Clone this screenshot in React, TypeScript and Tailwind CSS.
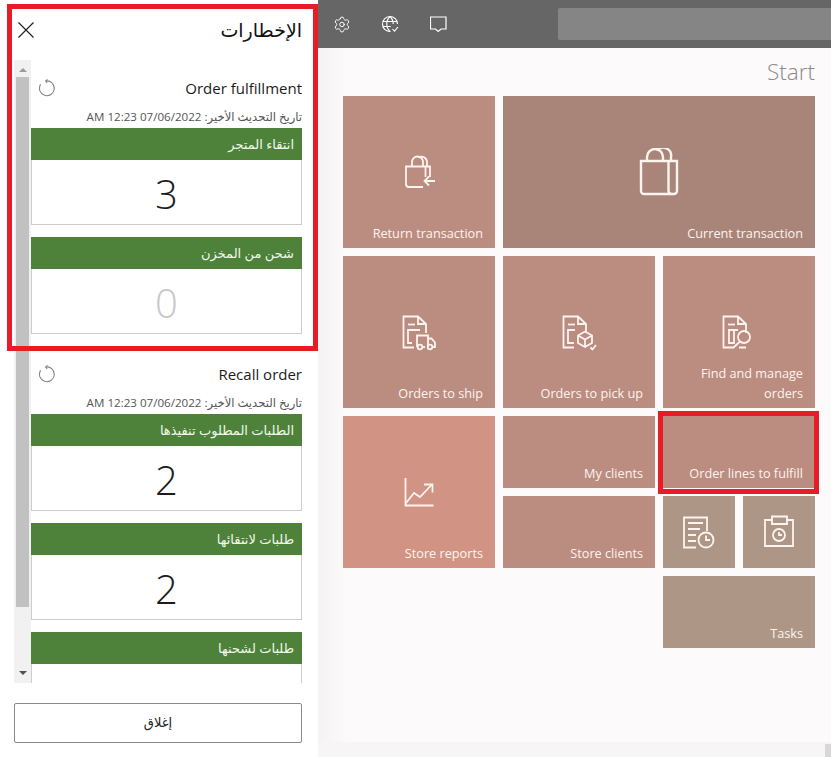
import React from "react";
import { Settings } from "lucide-react";

const font = "font-['Open_Sans','DejaVu_Sans',sans-serif]";

function DocBase() {
  return (
    <>
      <path d="M15 35.5H4.5V4.5H19L27 12V21" />
      <path d="M19 4.5V12H27" />
      <path d="M9 12.5H16" />
    </>
  );
}

function IconFrame({ children, size = 40 }: { children: React.ReactNode; size?: number }) {
  return (
    <svg width={size} height={size} viewBox="0 0 40 40" fill="none" stroke="currentColor" strokeWidth="1.8">
      {children}
    </svg>
  );
}

const ReturnIcon = () => (
  <IconFrame>
    <path d="M24 35H10a3 3 0 0 1-3-3V14.5H31V25" />
    <path d="M26.5 14.5V25" />
    <path d="M13 14.5V10a5.5 5.5 0 0 1 11 0v4.5" />
    <path d="M19.5 5.5a5.5 5.5 0 0 1 8.5 4.5v4.5" />
    <path d="M36 29H25.5M30 24.5L25.5 29L30 33.5" />
  </IconFrame>
);

const CurrentIcon = () => (
  <svg width="40" height="48" viewBox="0 0 40 48" fill="none" stroke="currentColor" strokeWidth="2.4">
    <path d="M2 13H38V43a3 3 0 0 1-3 3H5a3 3 0 0 1-3-3Z" />
    <path d="M29.5 13V43a3 3 0 0 0 3 3" />
    <path d="M8 13V9a8 8 0 0 1 16 0v4" />
    <path d="M18 2.5a8 8 0 0 1 14 6.5v4" />
  </svg>
);

const ShipIcon = () => (
  <IconFrame>
    <DocBase />
    <path d="M21 18H9V31H13" />
    <path d="M18 35V23.5H29V35M29 26.5H32.5L36 30.5V35H34M26 35H24" />
    <circle cx="21" cy="35" r="2.3" />
    <circle cx="31" cy="35" r="2.3" />
  </IconFrame>
);

const PickupIcon = () => (
  <IconFrame>
    <DocBase />
    <path d="M16 18H9V31H15" />
    <path d="M26 19.5L33 23.5V31L26 35L19 31V23.5Z" />
    <path d="M19 23.5L26 27.5L33 23.5M26 27.5V35" />
    <path d="M31.5 35.5L33.5 37.5L37 33" />
  </IconFrame>
);

const FindIcon = () => (
  <IconFrame>
    <DocBase />
    <path d="M9 18H19M10 18V31H15V18" />
    <circle cx="25" cy="25" r="6" />
    <path d="M21 29.5L14.5 35.5M20 35.5H27" />
  </IconFrame>
);

const ChartIcon = () => (
  <IconFrame>
    <path d="M6.5 6V33.5H34.5" />
    <path d="M7 31L15 21L21 25L32.5 13" />
    <path d="M25 12.5H33.5V20.5" />
  </IconFrame>
);

const ReportClockIcon = () => (
  <IconFrame>
    <path d="M17 35.5H5V5.5H28V19" />
    <path d="M9 11H24M9 17H21M9 23H17M9 29H17" />
    <circle cx="27" cy="28" r="7.5" />
    <path d="M27 23.5V28H31" />
  </IconFrame>
);

const SaveClockIcon = () => (
  <IconFrame>
    <path d="M13 8H6V34H34V8H28" />
    <path d="M13 4.5H28V12H13Z" />
    <circle cx="20" cy="23" r="6" />
    <path d="M20 20V23H23" />
  </IconFrame>
);

const RefreshIcon = () => (
  <svg width="18" height="18" viewBox="0 0 18 18" fill="none" stroke="#858585" strokeWidth="1.1">
    <path d="M7.8 2A7.4 7.4 0 1 1 2.6 5.4" />
    <path d="M9.5 0.4L7.6 2L9.2 4" />
  </svg>
);

type TileProps = {
  label?: string;
  color: string;
  span: string;
  icon?: React.ReactNode;
  highlighted?: boolean;
};

function Tile({ label, color, span, icon, highlighted }: TileProps) {
  return (
    <div className={`relative grid text-[#fdf3ef] ${color} ${span}`}>
      {icon && <div className="[grid-area:1/1] flex items-center justify-center">{icon}</div>}
      {label && (
        <div className="[grid-area:1/1] self-end justify-self-end pr-3 pb-[5px] pl-3 text-right text-[12.7px] leading-5">
          {label}
        </div>
      )}
      {highlighted && <div className="absolute -top-[5px] -left-[5px] -right-[4px] -bottom-[6px] border-[5px] border-[#e81c27]" />}
    </div>
  );
}

function CountCard({ title, count, muted }: { title: string; count?: number; muted?: boolean }) {
  return (
    <div className="mb-3">
      <div dir="rtl" className="h-8 bg-[#4e823b] px-2 text-[13px] leading-8 text-[#f2f7ec]">
        {title}
      </div>
      <div className={`flex h-[65px] items-center justify-center border border-t-0 border-[#cccccc] pt-[3px] text-[40px] font-light ${muted ? "text-[#c8c8c8]" : "text-[#1c1c1c]"}`}>
        {count}
      </div>
    </div>
  );
}

function NotificationGroup({ title, cards }: { title: string; cards: { title: string; count?: number; muted?: boolean }[] }) {
  return (
    <div className="mb-[30px]">
      <div className="flex h-5 items-center justify-between pl-[7px]">
        <RefreshIcon />
        <span className="text-[15px] text-[#1c1c1c]">{title}</span>
      </div>
      <div dir="rtl" className="flex h-[30px] items-center pt-2 text-[11.6px] whitespace-nowrap text-[#555555]">
        تاريخ التحديث الأخير: 07/06/2022 12:23 AM
      </div>
      {cards.map((c) => (
        <CountCard key={c.title} {...c} />
      ))}
    </div>
  );
}

function NotificationPanel() {
  return (
    <aside className="flex h-[757px] w-[318px] shrink-0 flex-col bg-white">
      <header className="flex h-[60px] shrink-0 items-center justify-between pr-4 pl-[18px]">
        <svg width="16" height="16" viewBox="0 0 16 16" stroke="#222222" strokeWidth="1.2">
          <path d="M0.5 0.5L15.5 15.5M15.5 0.5L0.5 15.5" />
        </svg>
        <h1 dir="rtl" className="text-[19px] font-medium text-[#111111]">الإخطارات</h1>
      </header>
      <div className="ml-[14px] flex h-[623px] w-[288px] overflow-hidden">
        <div className="flex w-[17px] shrink-0 flex-col items-center bg-[#f1f1f1]">
          <div className="flex h-[17px] items-center justify-center pt-[2px]">
            <div className="border-x-[4px] border-b-[4px] border-x-transparent border-b-[#9a9a9a]" />
          </div>
          <div className="h-[530px] w-[13px] bg-[#c1c1c1]" />
          <div className="flex h-[76px] items-end justify-center pb-2">
            <div className="border-x-[4px] border-t-[4px] border-x-transparent border-t-[#505050]" />
          </div>
        </div>
        <div className="w-[271px] pt-[18px]">
          <NotificationGroup
            title="Order fulfillment"
            cards={[
              { title: "انتقاء المتجر", count: 3 },
              { title: "شحن من المخزن", count: 0, muted: true },
            ]}
          />
          <NotificationGroup
            title="Recall order"
            cards={[
              { title: "الطلبات المطلوب تنفيذها", count: 2 },
              { title: "طلبات لانتقائها", count: 2 },
              { title: "طلبات لشحنها" },
            ]}
          />
        </div>
      </div>
      <button dir="rtl" className="mt-5 ml-[14px] h-10 w-[288px] rounded-[2px] border border-[#8a8a8a] bg-white text-[13px] text-[#222222]">
        إغلاق
      </button>
    </aside>
  );
}

export default function App() {
  return (
    <div className={`relative flex h-[757px] w-[831px] overflow-hidden bg-white ${font}`}>
      <NotificationPanel />

      <main className="flex h-[757px] flex-1 flex-col bg-gradient-to-r from-[#f4f3f3] from-0% to-[#fdfafb] to-[6%]">
        <div className="flex h-12 shrink-0 items-center bg-[#666666] pl-[15px] text-white">
          <div className="flex w-[18px] justify-center">
            <Settings size={19} strokeWidth={1.3} />
          </div>
          <div className="ml-[30px] flex w-[18px] justify-center">
            <svg width="18" height="18" viewBox="0 0 18 18" fill="none" stroke="currentColor" strokeWidth="1.1">
              <path d="M9.5 16.5A7.5 7.5 0 1 1 16.5 9" />
              <path d="M9 1.5C6.8 3.5 5.8 6 5.8 9s1 5.5 3.2 7.5M9 1.5c2.2 2 3.2 4.5 3.2 7.5M1.8 6.5h14.4M1.8 11.5h8" />
              <path d="M11.5 14L13.5 16.2L17 12" />
            </svg>
          </div>
          <div className="ml-[30px] flex w-[18px] justify-center">
            <svg width="17" height="17" viewBox="0 0 17 17" fill="none" stroke="currentColor" strokeWidth="1.2">
              <path d="M0.5 1H16V13H11L8.2 15.5L5.5 13H0.5Z" />
            </svg>
          </div>
          <div className="ml-[111px] h-8 flex-1 rounded-l-[2px] bg-[#858585]" />
        </div>

        <div className="flex h-12 shrink-0 items-center justify-end pr-4">
          <h2 className="text-[22.5px] font-light text-[#8a8a8a]">Start</h2>
        </div>

        <div className="ml-[25px] grid grid-cols-[repeat(6,72px)] grid-rows-[repeat(7,72px)] gap-2">
          <Tile label="Return transaction" color="bg-[#bb8c80]" span="col-span-2 row-span-2" icon={<ReturnIcon />} />
          <Tile label="Current transaction" color="bg-[#a98479]" span="col-span-4 row-span-2" icon={<CurrentIcon />} />
          <Tile label="Orders to ship" color="bg-[#bb8c80]" span="col-span-2 row-span-2" icon={<ShipIcon />} />
          <Tile label="Orders to pick up" color="bg-[#bb8c80]" span="col-span-2 row-span-2" icon={<PickupIcon />} />
          <Tile label="Find and manage orders" color="bg-[#bb8c80]" span="col-span-2 row-span-2" icon={<FindIcon />} />
          <Tile label="Store reports" color="bg-[#d19484]" span="col-span-2 row-span-2" icon={<ChartIcon />} />
          <Tile label="My clients" color="bg-[#bb8c80]" span="col-span-2" />
          <Tile label="Order lines to fulfill" color="bg-[#bb8c80]" span="col-span-2" highlighted />
          <Tile label="Store clients" color="bg-[#bb8c80]" span="col-span-2" />
          <Tile color="bg-[#ad9685]" span="" icon={<ReportClockIcon />} />
          <Tile color="bg-[#ad9685]" span="" icon={<SaveClockIcon />} />
          <Tile label="Tasks" color="bg-[#ad9685]" span="col-span-2 col-start-5" />
        </div>

        <div className="mt-auto flex h-[15px] w-full justify-end bg-[#f7f5f6] pt-[2px]">
          <div className="h-[13px] w-[6px] bg-[#d8d8d8]" />
        </div>
      </main>

      <div className="pointer-events-none absolute top-1 left-[7px] h-[347px] w-[311px] border-[5px] border-[#e81c27]" />
    </div>
  );
}
